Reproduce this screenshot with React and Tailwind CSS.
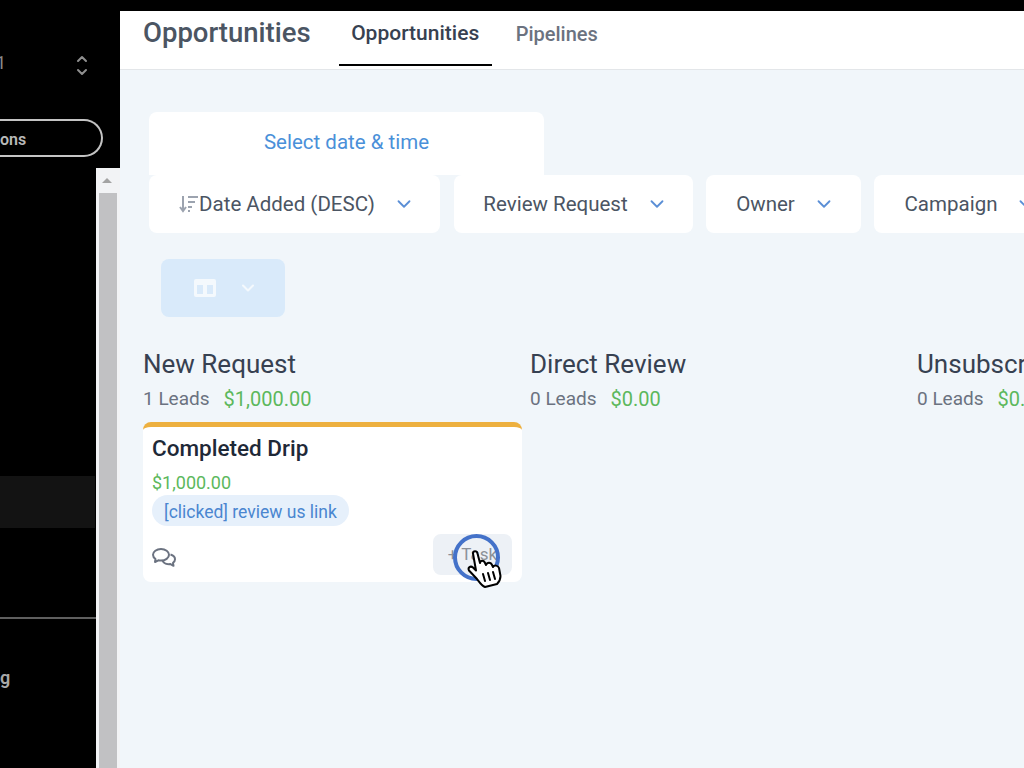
import React from "react";
import { ChevronDown, ChevronUp } from "lucide-react";

function FilterButton({ label, width, icon }) {
  return (
    <div className={`${width} h-[58px] shrink-0 bg-white rounded-lg flex items-center justify-center gap-[18px] pl-[4px] text-[20.5px] text-[#4b5563]`}>
      <span className="flex items-center whitespace-nowrap">
        {icon}
        {label}
      </span>
      <ChevronDown className="w-[22px] h-[22px] text-[#5b8fd6]" strokeWidth={2} />
    </div>
  );
}

function SortIcon() {
  return (
    <svg width="21" height="20" viewBox="0 0 21 20" fill="none" stroke="#9ca3af" strokeWidth="2">
      <path d="M5 2v15M2 13l3 4 3-4" />
      <path d="M10 3h10M10 8h7M10 13h4M10 17h2" />
    </svg>
  );
}

function CommentsIcon() {
  return (
    <svg className="mt-[6px]" width="24" height="21" viewBox="0 0 24 21" fill="none" stroke="#6b7280" strokeWidth="2" strokeLinejoin="round">
      <path d="M9 2C4.5 2 1 4.6 1 7.8c0 1.7 1 3.2 2.5 4.2L3 15l3.4-1.7c.8.2 1.7.3 2.6.3 4.5 0 8-2.6 8-5.8S13.5 2 9 2z" />
      <path d="M18.5 7.5c2.7.8 4.5 2.7 4.5 4.8 0 1.4-.7 2.6-2 3.5l.5 3-3-1.7c-3.500.5-7-1-8-3.400" />
    </svg>
  );
}

function HandCursor({ className }) {
  return (
    <svg className={className} width="35" height="38" viewBox="0 0 35 38" fill="white" stroke="black" strokeWidth="2" strokeLinejoin="round" strokeLinecap="round">
      <path d="M6 3.5C6 .5 10 .5 10.5 3.5L13 13C13.5 10 17 10 18 13L19 15C20 12 24 12 25 15L26 17C27 15 31 15 32 18L33.5 26C33.5 30 32 32 30 34L18 37C15 36 13 33 10 29L2 20.5C.5 17.5 3.5 15.5 6 17.5L9 20.5Z" />
      <path d="M16 24l2 7M21 23l2 7M26 22l2 7" fill="none" />
    </svg>
  );
}

function BoardColumn({ title, leads, amount, children }) {
  return (
    <div className="w-[387px] shrink-0">
      <div className="text-[26px] leading-[30px] text-[#374151] whitespace-nowrap">{title}</div>
      <div className="mt-[7px] flex gap-[14px] text-[19px] leading-[26px] whitespace-nowrap">
        <span className="text-[#6b7280]">{leads}</span>
        <span className="text-[20px] text-[#5cb85c]">{amount}</span>
      </div>
      {children}
    </div>
  );
}

export default function App() {
  return (
    <div className="w-[1024px] h-[768px] overflow-hidden bg-black flex flex-col font-['Roboto',sans-serif]">
      <div className="h-[11px] shrink-0 bg-black" />
      <div className="flex flex-1 min-h-0">
        {/* Sidebar */}
        <div className="w-[120px] shrink-0 flex flex-col bg-black">
          <div className="h-[157px] shrink-0 flex flex-col">
            <div className="h-[108px] flex items-start justify-between pr-[30px] pt-[40px]">
              <span className="-ml-[4px] text-[18px] leading-[24px] text-[#8a8a8a]">1</span>
              <span className="flex flex-col text-[#8f8f8f]">
                <ChevronUp className="w-[16px] h-[16px] -mb-[3px]" strokeWidth={3} />
                <ChevronDown className="w-[16px] h-[16px]" strokeWidth={3} />
              </span>
            </div>
            <div className="-ml-[20px] mr-[17px] h-[38px] border-2 border-[#c4c4c4] border-l-0 rounded-r-full flex items-center justify-start">
              <span className="ml-[20px] mt-[3px] text-[16px] font-semibold text-[#b8b8b8]">ons</span>
            </div>
          </div>
          <div className="flex flex-1 min-h-0">
            <div className="w-[96px] shrink-0 flex flex-col">
              <div className="h-[308px] shrink-0" />
              <div className="h-[52px] shrink-0 mr-[1px] bg-[#131313]" />
              <div className="h-[91px] shrink-0 border-b-2 border-[#5f5f5f]" />
              <div className="mt-[47px] text-right pr-[87px] text-[18px] leading-[24px] font-semibold text-[#a8a8a8]">g</div>
            </div>
            <div className="w-[24px] shrink-0 flex flex-col bg-[#f2f3f5]">
              <div className="h-[25px] flex items-center justify-center pr-[2px]">
                <span className="w-0 h-0 border-x-[5px] border-x-transparent border-b-[5px] border-b-[#a3a3a3]" />
              </div>
              <div className="flex-1 ml-[3px] mr-[3px] bg-[#c1c1c3]" />
            </div>
          </div>
        </div>

        {/* Main */}
        <div className="flex-1 min-w-0 flex flex-col bg-[#f1f6fa]">
          <div className="h-[59px] shrink-0 bg-white border-b border-[#e3e6e9] flex items-start pl-[23px]">
            <div className="text-[27.5px] leading-[44px] font-medium text-[#4b5563] whitespace-nowrap">Opportunities</div>
            <div className="ml-[28px] w-[153px] h-[55px] border-b-2 border-black flex justify-center text-[21px] leading-[44px] font-medium text-[#374151] whitespace-nowrap">
              Opportunities
            </div>
            <div className="ml-[24px] text-[20px] leading-[46px] font-medium text-[#6b7280] whitespace-nowrap">Pipelines</div>
          </div>

          <div className="relative flex-1 min-h-0 overflow-hidden pt-[42px] pl-[29px]">
            <div className="w-[395px] h-[63px] bg-white rounded-t-lg flex items-center justify-center pb-[2px] text-[20.5px] text-[#4a90d9]">
              Select date &amp; time
            </div>

            <div className="flex gap-[13px]">
              <FilterButton label="Date Added (DESC)" width="w-[291px] mr-[1px]" icon={<SortIcon />} />
              <FilterButton label="Review Request" width="w-[239px]" />
              <FilterButton label="Owner" width="w-[155px]" />
              <FilterButton label="Campaign" width="w-[190px]" />
            </div>

            <div className="ml-[12px] mt-[26px] w-[124px] h-[58px] rounded-lg bg-[#d9eafa] pl-[6px] flex items-center justify-center gap-[22px]">
              <svg width="22" height="18" viewBox="0 0 22 18" fill="#f4f9fd">
                <path d="M0 2a2 2 0 0 1 2-2h18a2 2 0 0 1 2 2v14a2 2 0 0 1-2 2H2a2 2 0 0 1-2-2zM3 6v9h6V6zm10 0v9h6V6z" fillRule="evenodd" />
              </svg>
              <ChevronDown className="w-[20px] h-[20px] text-[#f4f9fd]" strokeWidth={2.5} />
            </div>

            <div className="-ml-[6px] mt-[32px] flex">
              <BoardColumn title="New Request" leads="1 Leads" amount="$1,000.00">
                <div className="mt-[10px] w-[379px] h-[160px] bg-white rounded-lg border-t-[5px] border-[#edb03f] pl-[9px] pr-[10px] flex flex-col">
                  <div className="mt-[7px] text-[22.5px] leading-[28px] font-medium text-[#1f2937] whitespace-nowrap">Completed Drip</div>
                  <div className="mt-[9px] text-[18px] leading-[24px] text-[#5cb85c]">$1,000.00</div>
                  <div className="self-start h-[31px] px-[12px] pt-[3px] rounded-full bg-[#e6f0fb] flex items-center text-[17.5px] text-[#4a86d0] whitespace-nowrap">
                    [clicked] review us link
                  </div>
                  <div className="mt-[8px] flex items-center justify-between">
                    <CommentsIcon />
                    <div className="w-[79px] h-[41px] rounded-lg bg-[#edf1f6] flex items-center justify-center text-[17px] text-[#8b9098]">
                      + Task
                    </div>
                  </div>
                </div>
              </BoardColumn>
              <BoardColumn title="Direct Review" leads="0 Leads" amount="$0.00" />
              <BoardColumn title="Unsubscribed" leads="0 Leads" amount="$0.00" />
            </div>

            {/* Recording cursor */}
            <div className="absolute left-[333px] top-[464px] w-[47px] h-[47px] rounded-full border-[4px] border-[#4472c9]" />
            <HandCursor className="absolute left-[347px] top-[480px]" />
          </div>
        </div>
      </div>
    </div>
  );
}
